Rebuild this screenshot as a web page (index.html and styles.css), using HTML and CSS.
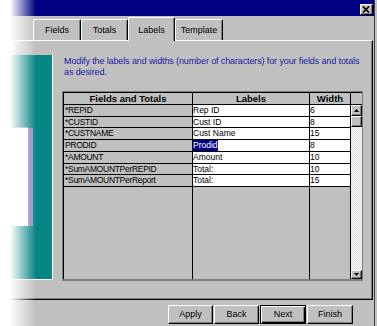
FILE: index.html
```html
<!DOCTYPE html>
<html lang="en">
<head>
<meta charset="utf-8">
<title>Labels</title>
<link rel="stylesheet" href="styles.css">
</head>
<body>
<div class="window">
  <div class="titlebar">
    <div class="close-btn">
      <svg width="8" height="7" viewBox="0 0 8 7"><path d="M1 0.5L7 6.5M7 0.5L1 6.5" stroke="#000" stroke-width="1.6" fill="none"/></svg>
    </div>
  </div>
  <div class="tabs">
    <div class="tab tab-fields">Fields</div>
    <div class="tab tab-totals">Totals</div>
    <div class="tab tab-labels active">Labels</div>
    <div class="tab tab-template">Template</div>
  </div>
  <div class="panel">
    <svg class="picture" width="53" height="225" viewBox="0 0 53 225">
      <rect x="0" y="0" width="52" height="224" fill="#078585"/>
      <rect x="0" y="73" width="28" height="98" fill="#ffffff"/>
      <rect x="28" y="73" width="5" height="98" fill="#8a86c4"/>
      <rect x="15" y="72" width="13" height="1" fill="#9a9a9a"/>
      <rect x="52" y="0" width="1" height="225" fill="#ffffff"/>
      <rect x="0" y="224" width="53" height="1" fill="#ffffff"/>
    </svg>
    <div class="content">
      <p class="intro">Modify the labels and widths (number of characters) for your fields and totals<br>as desired.</p>
      <div class="grid">
        <div class="grid-inner">
          <div class="cell hd">Fields and Totals</div>
          <div class="cell hd">Labels</div>
          <div class="cell hd">Width</div>
          <div class="cell hd hd-scroll"></div>

          <div class="cell f">*REPID</div>
          <div class="cell l">Rep ID</div>
          <div class="cell w">6</div>

          <div class="cell f">*CUSTID</div>
          <div class="cell l">Cust ID</div>
          <div class="cell w">8</div>

          <div class="cell f">*CUSTNAME</div>
          <div class="cell l">Cust Name</div>
          <div class="cell w">15</div>

          <div class="cell f">PRODID</div>
          <div class="cell l"><span class="sel">Prodid</span></div>
          <div class="cell w">8</div>

          <div class="cell f">*AMOUNT</div>
          <div class="cell l">Amount</div>
          <div class="cell w">10</div>

          <div class="cell f">*SumAMOUNTPerREPID</div>
          <div class="cell l">Total:</div>
          <div class="cell w">10</div>

          <div class="cell f">*SumAMOUNTPerReport</div>
          <div class="cell l">Total:</div>
          <div class="cell w">15</div>

          <div class="cell filler"></div>
          <div class="cell filler"></div>
          <div class="cell filler"></div>

          <div class="scrollbar">
            <div class="sb-btn sb-up"><svg width="5" height="3" viewBox="0 0 5 3"><path d="M2.5 0L5 3H0z" fill="#000"/></svg></div>
            <div class="sb-thumb"></div>
            <div class="sb-track"></div>
            <div class="sb-btn sb-down"><svg width="5" height="3" viewBox="0 0 5 3"><path d="M0 0H5L2.5 3z" fill="#000"/></svg></div>
          </div>
        </div>
      </div>
    </div>
  </div>
  <div class="buttons">
    <button class="btn btn-apply">Apply</button>
    <button class="btn btn-back">Back</button>
    <button class="btn btn-next default">Next</button>
    <button class="btn btn-finish">Finish</button>
  </div>
  <div class="fade"></div>
</div>
</body>
</html>
```

FILE: styles.css
```css
* {
  box-sizing: border-box;
}

html,
body {
  margin: 0;
  padding: 0;
}

body {
  width: 377px;
  height: 326px;
  overflow: hidden;
  background: #c0c0c0;
  font-family: "Liberation Sans", Arial, sans-serif;
  color: #000;
}

.window {
  position: relative;
  width: 377px;
  height: 326px;
  padding-right: 3px;
  display: flex;
  flex-direction: column;
  background: #c0c0c0;
  box-shadow: inset -2px 0 0 #c0c0c0, inset -3px 0 0 #404040;
}

/* title bar */
.titlebar {
  height: 16px;
  background: #000080;
  display: flex;
  justify-content: flex-end;
  align-items: flex-start;
  padding-top: 4px;
  padding-right: 1px;
}

.close-btn {
  width: 13px;
  height: 11px;
  background: #c0c0c0;
  border: 1px solid;
  border-color: #fff #000 #000 #fff;
  box-shadow: inset -1px -1px 0 #808080;
  display: flex;
  align-items: center;
  justify-content: center;
  padding-right: 1px;
}

.close-btn svg {
  display: block;
}

/* tabs */
.tabs {
  height: 24px;
  display: flex;
  align-items: flex-end;
  padding-left: 33px;
}

.tab {
  position: relative;
  height: 21px;
  padding-top: 5px;
  font-size: 9px;
  line-height: 11px;
  text-align: center;
  background: #c0c0c0;
  border-left: 1px solid #fff;
  border-top: 1px solid #fff;
  border-right: 1px solid #000;
  border-radius: 2px 2px 0 0;
  box-shadow: inset -1px 0 0 #808080;
}

.tab-fields { width: 48px; }
.tab-totals { width: 47px; }
.tab-labels { width: 47px; }
.tab-template { width: 48px; }

.tab.active {
  height: 24px;
  margin-bottom: -1px;
  padding-top: 7px;
  z-index: 2;
}

/* panel */
.panel {
  height: 260px;
  width: 373px;
  display: flex;
  border-top: 1px solid #fff;
  border-right: 1px solid #000;
  border-bottom: 1px solid #000;
  box-shadow: inset -1px -1px 0 #808080;
}

.picture {
  display: block;
  flex: none;
  margin-top: 14px;
}

.content {
  flex: 1;
  padding-left: 9px;
  display: flex;
  flex-direction: column;
}

.intro {
  margin: 15px 0 0 2px;
  font-size: 9px;
  line-height: 11px;
  letter-spacing: -0.12px;
  color: #1c1ca4;
  white-space: nowrap;
}

/* grid */
.grid {
  margin-top: 13px;
  width: 301px;
  height: 190px;
  border: 1px solid #808080;
  border-bottom-width: 2px;
}

.grid-inner {
  height: 100%;
  border-top: 1px solid #000;
  border-left: 1px solid #000;
  display: grid;
  grid-template-columns: 129px 117px 41px 11px;
  grid-template-rows: 12px repeat(7, 11.714px) 1fr;
}

.cell {
  border-right: 1px solid #000;
  border-bottom: 1px solid #000;
  font-size: 8.5px;
  line-height: 10.7px;
  white-space: nowrap;
  overflow: hidden;
}

.hd {
  background: #c0c0c0;
  font-weight: bold;
  font-size: 9.5px;
  line-height: 11px;
  text-align: center;
}

.hd-scroll {
  border-right: none;
}

.f {
  background: #c0c0c0;
  padding-left: 1px;
  letter-spacing: -0.3px;
}

.l,
.w {
  background: #fff;
}

.sel {
  display: inline-block;
  background: #000080;
  color: #fff;
  height: 10.7px;
}

.filler {
  background: #c0c0c0;
  border-bottom: none;
}

/* scrollbar */
.scrollbar {
  grid-column: 4;
  grid-row: 2 / span 8;
  display: flex;
  flex-direction: column;
}

.sb-btn {
  flex: none;
  height: 11px;
  background: #c0c0c0;
  border: 1px solid;
  border-color: #fff #000 #000 #fff;
  box-shadow: inset -1px -1px 0 #808080;
  display: flex;
  align-items: center;
  justify-content: center;
}

.sb-btn svg {
  display: block;
}

.sb-down {
  height: 9px;
}

.sb-thumb {
  flex: none;
  height: 11px;
  background: #c0c0c0;
  border: 1px solid;
  border-color: #fff #000 #000 #fff;
  box-shadow: inset -1px -1px 0 #808080;
}

.sb-track {
  flex: 1;
  background: repeating-conic-gradient(#ffffff 0 25%, #dcdcdc 0 50%) 0 0 / 2px 2px;
}

/* buttons */
.buttons {
  margin-top: 5px;
  display: flex;
  justify-content: flex-end;
  gap: 1px;
  padding-right: 21px;
}

.btn {
  height: 19px;
  padding: 0;
  margin: 0;
  font-family: "Liberation Sans", Arial, sans-serif;
  font-size: 9px;
  line-height: 11px;
  color: #000;
  background: #c0c0c0;
  border: 1px solid;
  border-color: #fff #000 #000 #fff;
  border-radius: 0;
  box-shadow: inset -1px -1px 0 #808080;
}

.btn-apply,
.btn-back {
  width: 45px;
}

.btn-next,
.btn-finish {
  width: 46px;
}

.btn.default {
  border-color: #000;
  box-shadow: inset 1px 1px 0 #fff, inset -1px -1px 0 #000, inset -2px -2px 0 #808080;
}

/* left fade over the screenshot edge */
.fade {
  position: absolute;
  left: 0;
  top: 0;
  width: 40px;
  height: 100%;
  background: linear-gradient(to right, #fff 0, #fff 10px, rgba(255, 255, 255, 0) 36px);
  pointer-events: none;
  z-index: 5;
}
```
